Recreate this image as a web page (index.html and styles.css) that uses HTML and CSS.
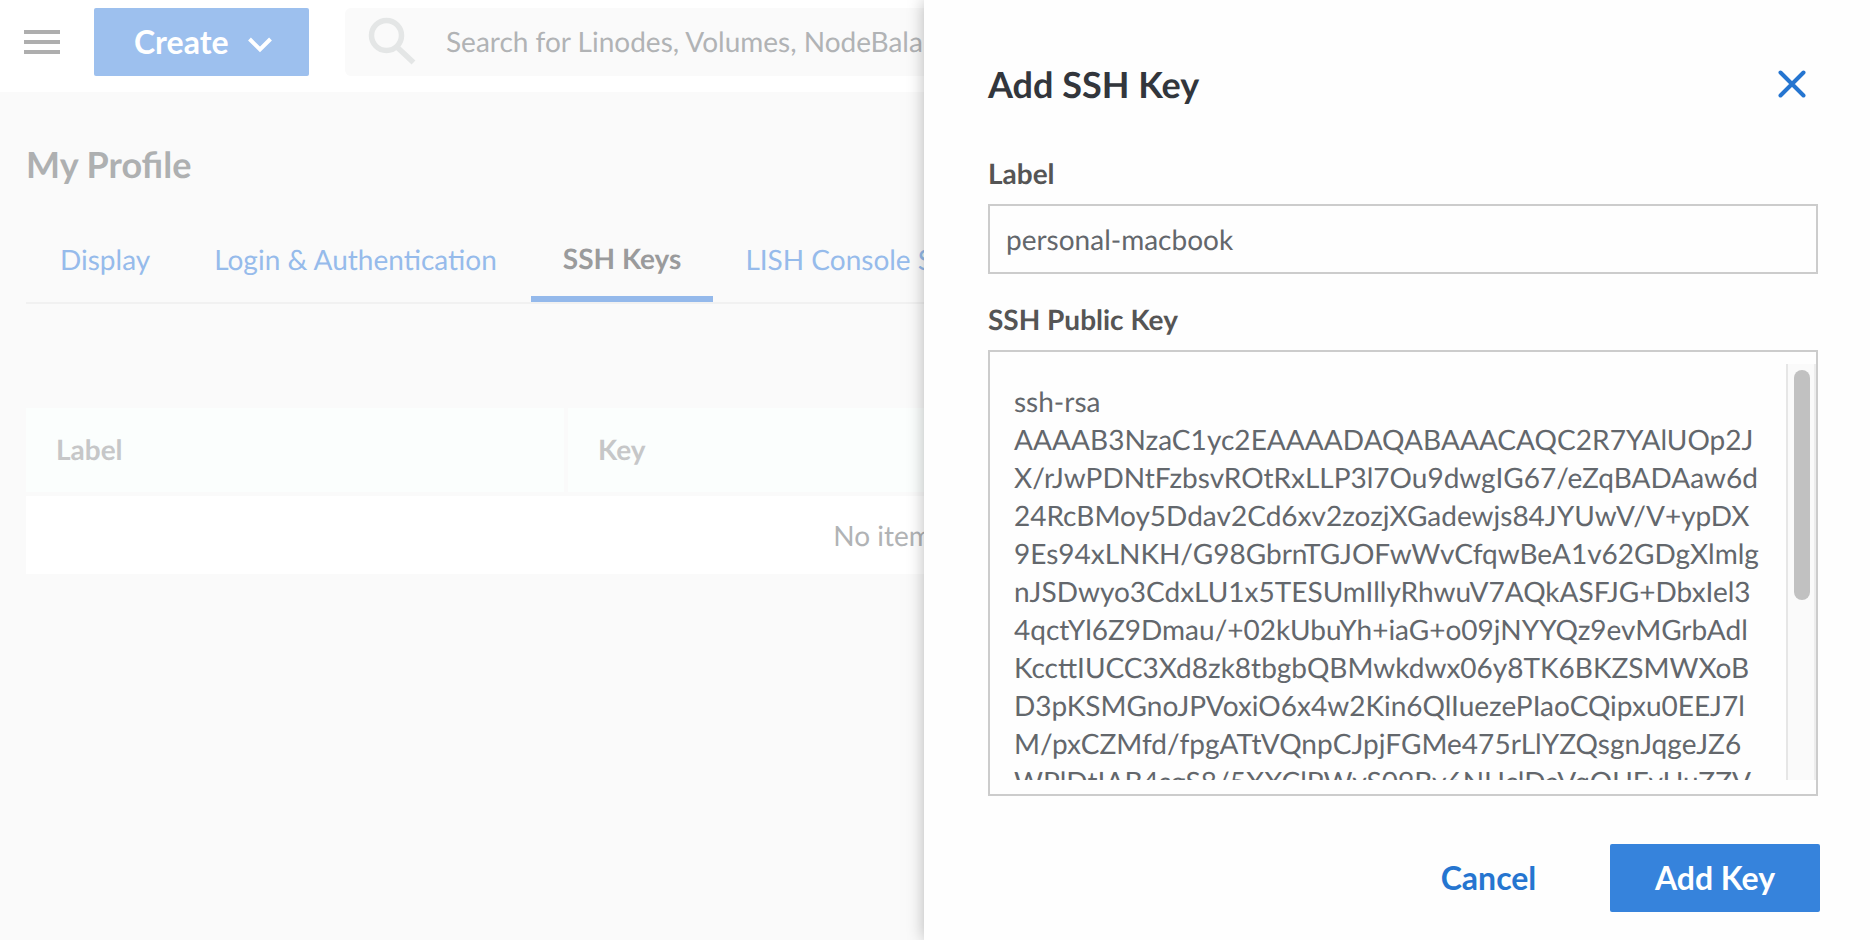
FILE: index.html
```html
<!DOCTYPE html>
<html lang="en">
<head>
<meta charset="utf-8">
<title>My Profile - SSH Keys</title>
<link rel="stylesheet" href="styles.css">
</head>
<body>
<div class="app">
  <header class="topbar">
    <svg class="menu-icon" viewBox="0 0 36 24" width="36" height="24"><path d="M0 0h36v4H0zM0 10h36v4H0zM0 20h36v4H0z"/></svg>
    <button class="create">Create
      <svg class="chevron" viewBox="0 0 24 16" width="24" height="16"><path d="M1.500 2 12 12.500 22.500 2"/></svg>
    </button>
    <div class="search">
      <svg class="search-icon" viewBox="0 0 48 48" width="48" height="48"><circle cx="18.500" cy="18.500" r="15"/><path d="M30 31 45.500 45.500"/></svg>
      <span>Search for Linodes, Volumes, NodeBalancers, Domains, Tags...</span>
    </div>
  </header>
  <main class="content">
    <h1 class="page-title">My Profile</h1>
    <nav class="tabs">
      <a class="tab">Display</a>
      <a class="tab">Login &amp; Authentication</a>
      <a class="tab active">SSH Keys</a>
      <a class="tab">LISH Console Settings</a>
    </nav>
    <div class="table">
      <div class="th">Label</div>
      <div class="th">Key</div>
      <div class="empty">No items to display.</div>
    </div>
  </main>
</div>
<aside class="drawer">
  <div class="drawer-head">
    <h2 class="drawer-title">Add SSH Key</h2>
    <svg class="close" viewBox="0 0 28 28" width="28" height="28"><path d="M2.500 2.500 25.500 25.500M25.500 2.500 2.500 25.500"/></svg>
  </div>
  <div class="label">Label</div>
  <div class="input">personal-macbook</div>
  <div class="label key-label">SSH Public Key</div>
  <div class="textarea">
    <div class="key-text">
      <div>ssh-rsa</div>
      <div class="loose">AAAAB3NzaC1yc2EAAAADAQABAAACAQC2R7YAlUOp2J</div>
      <div>X/rJwPDNtFzbsvROtRxLLP3l7Ou9dwgIG67/eZqBADAaw6d</div>
      <div>24RcBMoy5Ddav2Cd6xv2zozjXGadewjs84JYUwV/V+ypDX</div>
      <div>9Es94xLNKH/G98GbrnTGJOFwWvCfqwBeA1v62GDgXlmlg</div>
      <div>nJSDwyo3CdxLU1x5TESUmIllyRhwuV7AQkASFJG+DbxIel3</div>
      <div>4qctYl6Z9Dmau/+02kUbuYh+iaG+o09jNYYQz9evMGrbAdl</div>
      <div>KccttIUCC3Xd8zk8tbgbQBMwkdwx06y8TK6BKZSMWXoB</div>
      <div>D3pKSMGnoJPVoxiO6x4w2Kin6QlIuezePIaoCQipxu0EEJ7l</div>
      <div class="loose">M/pxCZMfd/fpgATtVQnpCJpjFGMe475rLlYZQsgnJqgeJZ6</div>
      <div class="loose">WPlDtIAB4sgS8/5XXClPWyS09By6NUclDaVqQUEvUuZZV</div>
    </div>
    <div class="track"><div class="thumb"></div></div>
  </div>
  <div class="actions">
    <button class="cancel">Cancel</button>
    <button class="submit">Add Key</button>
  </div>
</aside>
</body>
</html>
```
FILE: styles.css
```css
* { box-sizing: border-box; }
body {
  margin: 0;
  width: 1870px;
  height: 940px;
  overflow: hidden;
  background: #fafafa;
  font-family: Lato, "Liberation Sans", sans-serif;
  font-size: 28px;
  line-height: 38px;
  text-rendering: geometricPrecision;
}
button { border: 0; padding: 0; font: bold 32px/38px Lato, sans-serif; }
.app { height: 940px; overflow: hidden; }
.topbar {
  display: flex;
  align-items: flex-start;
  height: 92px;
  padding: 8px 0 0 24px;
  background: #fff;
}
.menu-icon { flex: none; margin: 22px 34px 0 0; fill: #aeaeae; }
.create {
  flex: none;
  display: flex;
  align-items: center;
  width: 215px;
  height: 68px;
  padding-left: 40px;
  border-radius: 2px;
  background: #9dc0ee;
  color: #fff;
}
.chevron { margin: 5px 0 0 19px; fill: none; stroke: #fff; stroke-width: 4; }
.search {
  flex: 1;
  display: flex;
  height: 68px;
  margin-left: 36px;
  padding: 9px 0 0 23px;
  border-radius: 6px 0 0 6px;
  background: #fafafa;
  color: #b1b3b5;
  white-space: nowrap;
}
.search span { margin: 5px 0 0 30px; }
.search-icon { flex: none; fill: none; stroke: #e4e6e6; stroke-width: 5.500; }
.content { padding: 53px 0 0 26px; }
.page-title { margin: 0; font-size: 36px; line-height: 38px; color: #aeb0b1; }
.tabs {
  display: flex;
  height: 121px;
  padding: 57px 0 0 2px;
  border-bottom: 2px solid #f1f1f1;
  white-space: nowrap;
}
.tab { height: 62px; padding: 0 32px; color: #96bbeb; }
.tab.active {
  margin-left: 2px;
  padding-top: 0;
  line-height: 36px;
  border-bottom: 6px solid #94b9eb;
  color: #9a9b9c;
  font-weight: bold;
}
.table {
  display: grid;
  grid-template-columns: 538px 1fr;
  grid-template-rows: 84px 78px;
  gap: 4px;
  width: 1856px;
  margin-top: 104px;
}
.th {
  padding: 22px 29px 22px 30px;
  background: #fbfefd;
  color: #c6c7c8;
  font-weight: bold;
}
.empty {
  grid-column: 1 / -1;
  padding-top: 20px;
  background: #fff;
  color: #b1b3b5;
  text-align: center;
}
.drawer {
  position: absolute;
  top: 0;
  left: 924px;
  width: 946px;
  height: 940px;
  padding: 64px 50px 0 64px;
  background: #fefefe;
  box-shadow: 0 0 16px rgba(0, 0, 0, .27);
}
.drawer-head {
  display: flex;
  align-items: center;
  justify-content: space-between;
  height: 40px;
  margin-bottom: 50px;
  padding-right: 14px;
}
.drawer-title { margin: 0; font-size: 36px; color: #32363c; }
.close { fill: none; stroke: #2575d0; stroke-width: 4; stroke-linecap: round; }
.label { color: #555; font-weight: bold; }
.key-label { margin-top: 26px; }
.input {
  width: 830px;
  height: 70px;
  margin-top: 12px;
  padding: 14px 16px;
  border: 2px solid #ccc;
  background: #fefefe;
  color: #63676c;
}
.textarea {
  display: flex;
  width: 830px;
  height: 446px;
  margin-top: 12px;
  padding: 12px 0 14px;
  border: 2px solid #ccc;
  background: #fefefe;
}
.key-text {
  flex: 1;
  padding: 18px 0 0 24px;
  overflow: hidden;
  color: #63676c;
  white-space: nowrap;
}
.loose { letter-spacing: .04px; }
.track {
  flex: none;
  width: 30px;
  padding: 6px 4px 0 6px;
  border-left: 2px solid #e6e6e6;
  border-right: 2px solid #ededed;
  background: #fafafa;
}
.thumb { width: 16px; height: 230px; border-radius: 8px; background: #c1c1c1; }
.actions { display: flex; justify-content: flex-end; margin-top: 48px; }
.cancel { width: 169px; background: none; color: #2575d0; }
.submit {
  width: 210px;
  height: 68px;
  margin-left: 37px;
  border-radius: 2px;
  background: #3683dc;
  color: #fff;
}
```
